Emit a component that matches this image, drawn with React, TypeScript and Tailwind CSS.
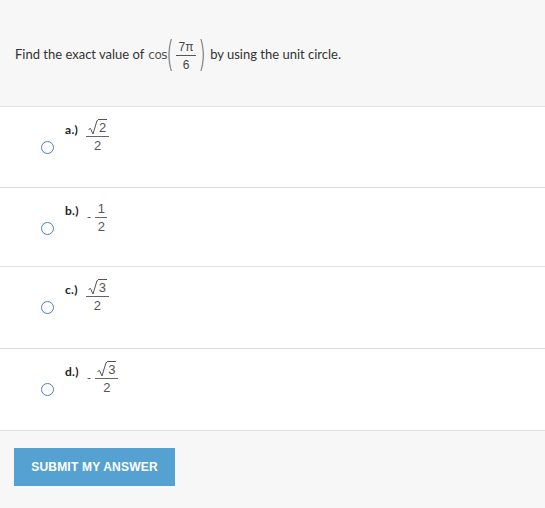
import type { JSX, ReactNode } from 'react';

interface Choice {
  key: string;
  label: string;
  minus: boolean;
  root: boolean;
  num: string;
  h: string;
}

const CHOICES: Choice[] = [
  { key: 'a', label: 'a.)', minus: false, root: true, num: '2', h: 'h-[81px]' },
  { key: 'b', label: 'b.)', minus: true, root: false, num: '1', h: 'h-[79px]' },
  { key: 'c', label: 'c.)', minus: false, root: true, num: '3', h: 'h-[82px]' },
  { key: 'd', label: 'd.)', minus: true, root: true, num: '3', h: 'h-[82px]' },
];

export default function App(): JSX.Element {
  return (
    <div className="w-[545px] h-[508px] bg-white text-[#333] font-['Lato','Noto_Sans',sans-serif]">
      {/* Question */}
      <div className="h-[107px] bg-[#f7f7f7] border-b border-[#e0e0e0] pl-[15px] pt-[5px] flex items-center">
        <span className="text-[13px] pb-[2px]">Find the exact value of</span>
        <span className="ml-[4px] text-[12px] pb-[2px] text-[#555] font-['DejaVu_Sans',sans-serif] tracking-[-0.5px]">cos</span>
        <Paren>(</Paren>
        <span className="inline-flex flex-col items-center text-[12px] text-[#444] leading-none font-['Liberation_Sans',sans-serif] px-[3px]">
          <span className="pb-[2px]">7π</span>
          <span className="w-[20px] border-t border-[#555]" />
          <span className="pt-[3px]">6</span>
        </span>
        <Paren>)</Paren>
        <span className="ml-[5px] text-[13px] pb-[2px]">by using the unit circle.</span>
      </div>

      {/* Options */}
      {CHOICES.map((c) => (
        <div key={c.key} className={`flex items-start pl-[41px] border-b border-[#e0e0e0] ${c.h}`}>
          <span className="mt-[34px] w-[13px] h-[13px] rounded-full border-[1.5px] border-[#4a7fc0] bg-white shrink-0" />
          <span className="ml-[11px] mt-[14px] text-[12px] font-bold text-[#222] tracking-[0.3px]">{c.label}</span>
          <div className="ml-[8px] mt-[11px] flex items-center">
            {c.minus && <span className="text-[12px] text-[#555] mr-[4px] mt-[2px]">-</span>}
            <Fraction root={c.root} num={c.num} />
          </div>
        </div>
      ))}

      {/* Footer */}
      <div className="h-[77px] bg-[#f7f7f7] pl-[14px] pt-[17px]">
        <button
          type="button"
          className="w-[161px] h-[38px] bg-[#55a1d2] text-white text-[12px] font-bold uppercase font-['Liberation_Sans',sans-serif] tracking-[0.2px]"
        >
          Submit my answer
        </button>
      </div>
    </div>
  );
}

function Paren({ children }: { children: ReactNode }): JSX.Element {
  return (
    <span className="text-[36px] leading-none text-[#555] font-['DejaVu_Sans',sans-serif] font-extralight scale-x-[0.5] mx-[-4px] mb-[4px]">
      {children}
    </span>
  );
}

function Fraction({ root, num }: { root: boolean; num: string }): JSX.Element {
  return (
    <span className="inline-flex flex-col items-center text-[13px] text-[#555] leading-none font-['Liberation_Sans',sans-serif]">
      <span className="flex items-end h-[16px] px-[1px]">
        {root ? (
          <span className="flex items-end">
            <svg width="10" height="15" viewBox="0 0 10 15" className="mb-[-1px]" aria-hidden="true">
              <path d="M0.5 9.5 L2.5 8.5 L5 14 L9 0.6 L10 0.6" fill="none" stroke="#555" strokeWidth="1" />
            </svg>
            <span className="border-t border-[#555] pt-[1px] px-[1px]">{num}</span>
          </span>
        ) : (
          <span>{num}</span>
        )}
      </span>
      <span className={`border-t border-[#666] mt-[2px] ${root ? 'w-[23px]' : 'w-[12px]'}`} />
      <span className="pt-[2px]">2</span>
    </span>
  );
}
